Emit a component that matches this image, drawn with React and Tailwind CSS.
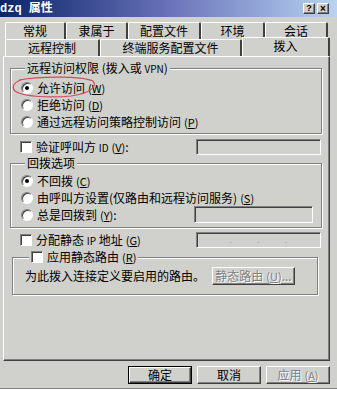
import React from 'react';

const raised = 'border border-t-white border-l-white border-r-[#404040] border-b-[#404040] shadow-[inset_-1px_-1px_0_#808080]';
const sunken = 'border border-t-[#808080] border-l-[#808080] border-r-white border-b-white shadow-[inset_1px_1px_0_#404040]';
const etched = 'border border-[#808080] shadow-[1px_1px_0_#fff,inset_1px_1px_0_#fff]';

function Mn({ k }) {
    // mnemonic letter in brackets, e.g. (W)
    return (
        <span className="text-[11px] ml-[3px]">
            (<span className="underline">{k}</span>)
        </span>
    );
}

function Radio({ checked }) {
    return (
        <div className={`w-[12px] h-[12px] rounded-full bg-white flex items-center justify-center shrink-0 ${sunken}`}>
            {checked && <div className="w-[4px] h-[4px] rounded-full bg-black" />}
        </div>
    );
}

function Check() {
    return <div className={`w-[12px] h-[12px] bg-white shrink-0 ${sunken}`} />;
}

function Tab({ label, w, active }) {
    if (active) {
        return (
            <div
                className={`relative z-10 -mt-[2px] -mb-[1px] h-[19px] bg-[#d0d0cc] border-t border-l border-t-white border-l-white border-r-2 border-r-[#404040] rounded-t-[2px] flex justify-center pt-[1px] ${w}`}
            >
                {label}
            </div>
        );
    }
    return (
        <div
            className={`h-[17px] border-t border-l border-t-white border-l-white border-r-2 border-r-[#404040] rounded-t-[2px] flex items-center justify-center ${w}`}
        >
            {label}
        </div>
    );
}

export default function App() {
    return (
        <div className="w-[337px] h-[394px] bg-white overflow-hidden text-black text-[12px] leading-[14px] font-['Noto_Sans_CJK_SC',sans-serif]">
            <div className="h-[389px] bg-[#d0d0cc] border-b border-b-[#808080] flex flex-col">
                {/* Title bar */}
                <div className="h-[17px] flex items-center bg-gradient-to-r from-[#0a246a] via-[#6a72b8] to-[#b8d4f0] pr-[8px]">
                    <span className="text-white font-bold text-[12px] font-['Liberation_Mono','Noto_Sans_CJK_SC',monospace]">dzq 属性</span>
                    <div className="ml-auto flex gap-[2px]">
                        <div className={`w-[12px] h-[11px] bg-[#d0d0cc] text-[9px] leading-[9px] font-bold flex items-center justify-center font-['Liberation_Sans',sans-serif] ${raised}`}>?</div>
                        <div className={`w-[12px] h-[11px] bg-[#d0d0cc] text-[10px] leading-[9px] font-bold flex items-center justify-center font-['Liberation_Sans',sans-serif] ${raised}`}>×</div>
                    </div>
                </div>

                {/* Tabs */}
                <div className="pl-[5px] pt-[5px] flex flex-col">
                    <div className="flex">
                        <Tab label="常规" w="w-[61px]" />
                        <Tab label="隶属于" w="w-[62px]" />
                        <Tab label="配置文件" w="w-[73px]" />
                        <Tab label="环境" w="w-[64px]" />
                        <Tab label="会话" w="w-[63px]" />
                    </div>
                    <div className="flex">
                        <Tab label="远程控制" w="w-[95px]" />
                        <Tab label="终端服务配置文件" w="w-[142px]" />
                        <Tab label="拨入" w="w-[88px]" active />
                    </div>
                </div>

                {/* Panel */}
                <div className="relative ml-[3px] w-[327px] h-[305px] border border-t-white border-l-white border-r-[#404040] border-b-[#404040] shadow-[inset_-1px_-1px_0_#808080] flex flex-col">
                    {/* remote access permission */}
                    <fieldset className={`ml-[6px] mt-[4px] w-[312px] pl-[10px] pt-[3px] pb-[3px] ${etched}`}>
                        <legend className="ml-[4px] px-[2px] bg-[#d0d0cc]">
                            远程访问权限 (拨入或 <span className="text-[10px]">VPN</span>)
                        </legend>
                        <div className="h-[17px] flex items-center gap-[4px]">
                            <Radio checked />
                            <span>允许访问<Mn k="W" /></span>
                        </div>
                        <div className="h-[17px] flex items-center gap-[4px]">
                            <Radio />
                            <span>拒绝访问<Mn k="D" /></span>
                        </div>
                        <div className="h-[17px] flex items-center gap-[4px]">
                            <Radio />
                            <span>通过远程访问策略控制访问<Mn k="P" /></span>
                        </div>
                    </fieldset>

                    {/* verify caller id */}
                    <div className="mt-[5px] ml-[16px] h-[16px] flex items-center gap-[4px]">
                        <Check />
                        <span>验证呼叫方 <span className="text-[10px]">ID</span><Mn k="V" />:</span>
                        <div className={`ml-auto mr-[8px] w-[125px] h-[16px] ${sunken}`} />
                    </div>

                    {/* callback options */}
                    <fieldset className={`ml-[6px] mt-[1px] w-[312px] pl-[10px] pt-[2px] pb-[4px] ${etched}`}>
                        <legend className="ml-[4px] px-[2px] bg-[#d0d0cc]">回拨选项</legend>
                        <div className="h-[17px] flex items-center gap-[4px]">
                            <Radio checked />
                            <span>不回拨<Mn k="C" /></span>
                        </div>
                        <div className="h-[17px] flex items-center gap-[4px]">
                            <Radio />
                            <span>由呼叫方设置(仅路由和远程访问服务)<Mn k="S" /></span>
                        </div>
                        <div className="h-[17px] flex items-center gap-[4px]">
                            <Radio />
                            <span>总是回拨到<Mn k="Y" />:</span>
                            <div className={`ml-auto mr-[8px] w-[119px] h-[17px] ${sunken}`} />
                        </div>
                    </fieldset>

                    {/* static ip */}
                    <div className="mt-[4px] ml-[16px] h-[16px] flex items-center gap-[4px]">
                        <Check />
                        <span>分配静态 <span className="text-[10px]">IP</span> 地址<Mn k="G" /></span>
                        <div className={`ml-auto mr-[8px] w-[125px] h-[16px] flex items-center justify-around px-[20px] text-[8px] text-[#a0a0a0] ${sunken}`}>
                            <span>.</span>
                            <span>.</span>
                            <span>.</span>
                        </div>
                    </div>

                    {/* static routes */}
                    <fieldset className={`ml-[8px] mt-[2px] w-[306px] pl-[12px] pt-[3px] pb-[9px] ${etched}`}>
                        <legend className="ml-[4px] px-[2px] bg-[#d0d0cc] flex items-center gap-[4px]">
                            <Check />
                            <span>应用静态路由<Mn k="R" /></span>
                        </legend>
                        <div className="h-[18px] flex items-center">
                            <span>为此拨入连接定义要启用的路由。</span>
                            <div className={`ml-auto mr-[22px] w-[83px] h-[18px] flex items-center justify-center text-[#808080] [text-shadow:1px_1px_0_#fff] ${raised}`}>
                                静态路由<Mn k="U" />...
                            </div>
                        </div>
                    </fieldset>

                    {/* hand drawn mark */}
                    <svg className="absolute left-[7px] top-[18px] pointer-events-none" width="86" height="24" viewBox="0 0 86 24">
                        <path
                            d="M8 5 C 30 1, 70 1, 82 6 C 86 10, 82 18, 60 21 C 40 23, 12 22, 4 16 C 0 12, 3 6, 14 4"
                            fill="none"
                            stroke="#d8485a"
                            strokeWidth="1.2"
                        />
                    </svg>
                </div>

                {/* Buttons */}
                <div className="mt-[5px] flex justify-end gap-[5px] pr-[7px]">
                    <div className="w-[64px] h-[18px] border border-black">
                        <div className={`w-full h-full flex items-center justify-center ${raised}`}>确定</div>
                    </div>
                    <div className={`w-[64px] h-[18px] flex items-center justify-center ${raised}`}>取消</div>
                    <div className={`w-[64px] h-[18px] flex items-center justify-center text-[#808080] [text-shadow:1px_1px_0_#fff] ${raised}`}>
                        应用<Mn k="A" />
                    </div>
                </div>
            </div>
        </div>
    );
}
